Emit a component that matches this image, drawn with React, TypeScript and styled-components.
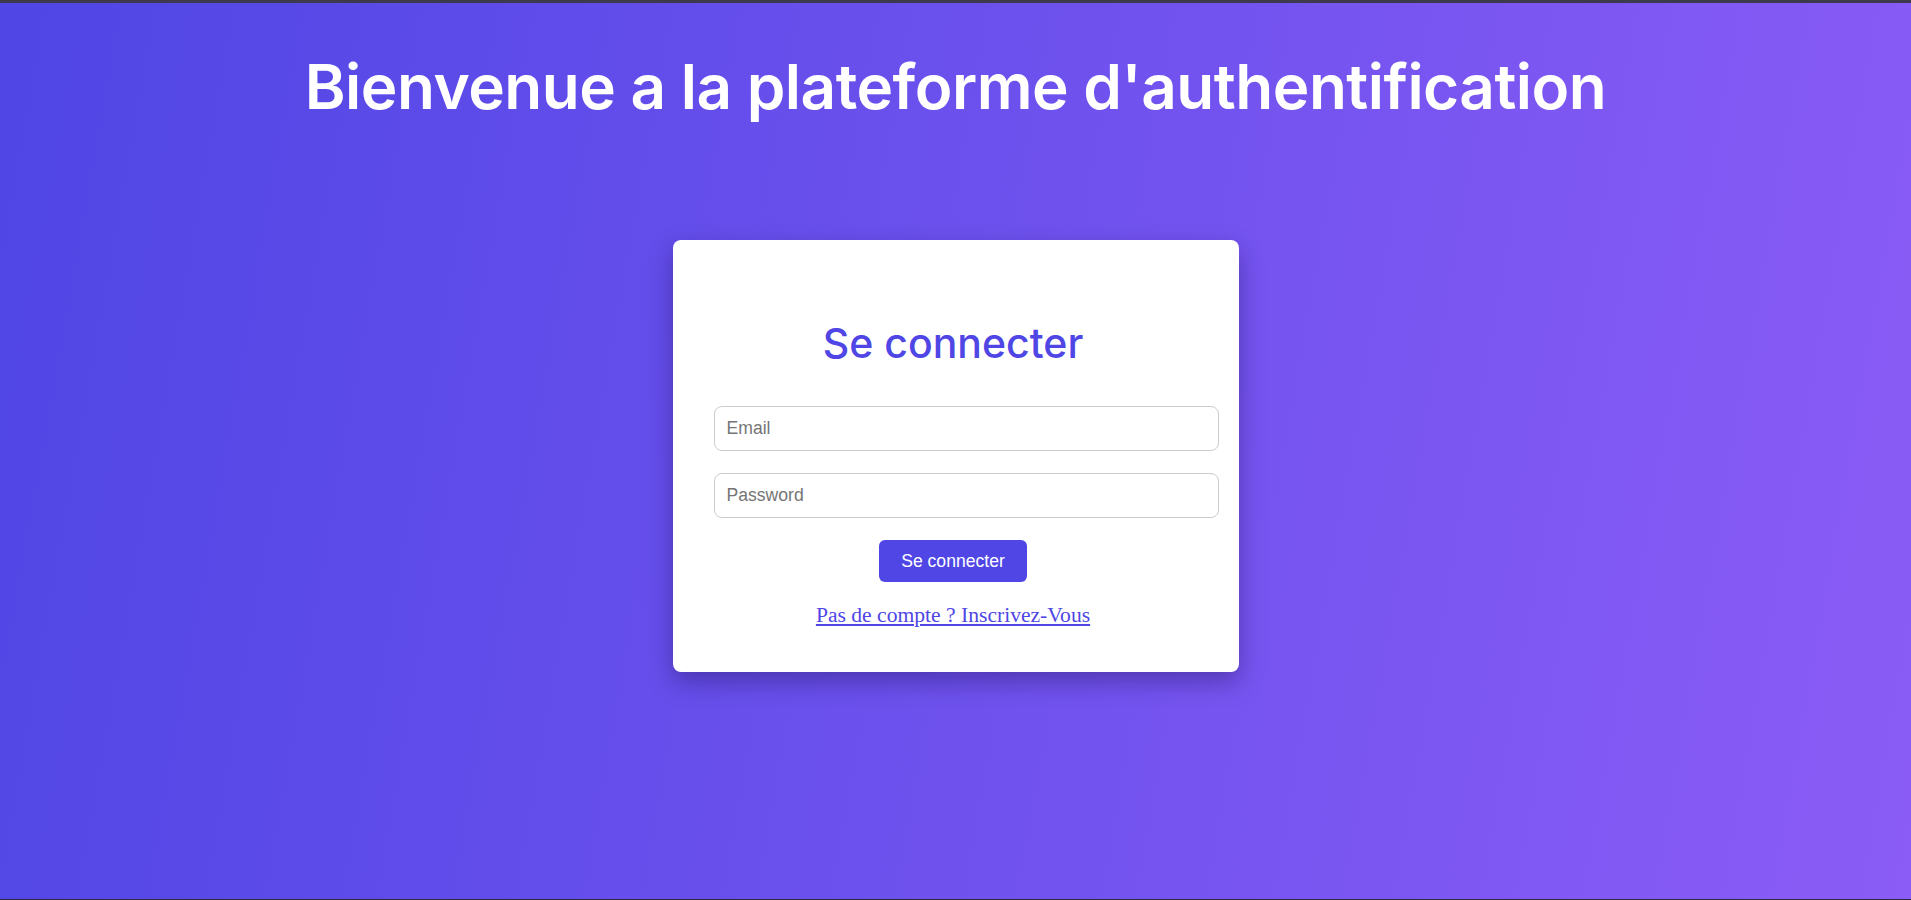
import React from 'react'
import styled, { createGlobalStyle } from 'styled-components'

const GlobalStyle = createGlobalStyle`
  * { box-sizing: border-box; }
  body {
    margin: 0;
    font-family: "Liberation Serif", "Times New Roman", serif;
  }
`

const Page = styled.div`
  min-height: 100vh;
  display: flex;
  flex-direction: column;
  align-items: center;
  background: linear-gradient(100deg, #4f46e5 0%, #8b5cf6 100%);
  border-top: 3px solid #3d3a4e;
  border-bottom: 1px solid #2c2940;
`

const Heading = styled.h1`
  margin: 46px 0 0;
  font-family: Inter, "Noto Sans", sans-serif;
  font-size: 62px;
  font-weight: 600;
  line-height: 76px;
  color: #ffffff;
  letter-spacing: -0.5px;
`

const Card = styled.div`
  margin-top: 115px;
  width: 566px;
  padding: 40px 46px 40px 41px;
  background: #ffffff;
  border-radius: 8px;
  box-shadow: 0 10px 25px rgba(20, 10, 70, 0.35);
  display: flex;
  flex-direction: column;
  align-items: center;
`

const CardTitle = styled.h2`
  margin: 38px 0 38px;
  font-family: Inter, "Noto Sans", sans-serif;
  font-size: 41px;
  font-weight: 500;
  line-height: 50px;
  color: #4f46e5;
`

const Form = styled.form`
  width: 100%;
  display: flex;
  flex-direction: column;
  align-items: center;
`

const Input = styled.input`
  box-sizing: content-box;
  align-self: flex-start;
  width: 100%;
  margin: 0 0 22px;
  padding: 11px 12px;
  border: 1px solid #cccccc;
  border-radius: 8px;
  font-family: "Liberation Sans", Arial, sans-serif;
  font-size: 17.6px;
  color: #333333;
  outline: none;

  &::placeholder {
    color: #757575;
  }
`

const Button = styled.button`
  margin-top: 0;
  padding: 11px 22px;
  border: none;
  border-radius: 6px;
  background: #4f46e5;
  color: #ffffff;
  font-family: "Liberation Sans", Arial, sans-serif;
  font-size: 17.6px;
  line-height: 20px;
  cursor: pointer;
`

const SignupLink = styled.a`
  margin: 21px 0 4px;
  font-family: "Liberation Serif", "Times New Roman", serif;
  font-size: 21.6px;
  color: #4f46e5;
  text-decoration: underline;
`

export default function App() {
  return (
    <>
      <GlobalStyle />
      <Page>
        <Heading>Bienvenue a la plateforme d'authentification</Heading>
        <Card>
          <CardTitle>Se connecter</CardTitle>
          <Form onSubmit={e => e.preventDefault()}>
            <Input type="email" placeholder="Email" />
            <Input type="password" placeholder="Password" />
            <Button type="submit">Se connecter</Button>
          </Form>
          <SignupLink href="#">Pas de compte ? Inscrivez-Vous</SignupLink>
        </Card>
      </Page>
    </>
  )
}
